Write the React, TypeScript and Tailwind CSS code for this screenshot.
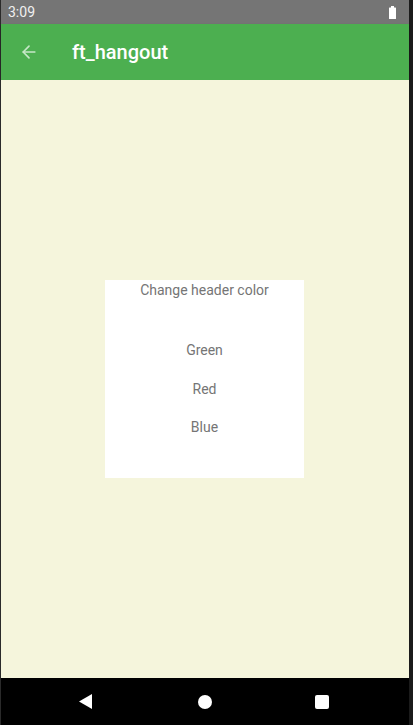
import { ArrowLeft } from "lucide-react";

export default function App() {
    const colors = ["Green", "Red", "Blue"];

    return (
        <div className="flex h-[725px] w-[413px] bg-[#1b1b1b] font-['Roboto',sans-serif]">
            {/* thin frame line on the left */}
            <div className="w-px bg-[#2a2a2a]" />

            <div className="flex w-[408px] flex-col">
                {/* Status bar */}
                <div className="flex h-6 items-center justify-between bg-[#757575] pl-[7px] pr-[13px]">
                    <span className="text-[14px] text-[#f0f0f0]">3:09</span>
                    <svg width="7" height="13" viewBox="0 0 7 13">
                        <rect x="2" y="0" width="3" height="2" fill="#ffffff" />
                        <rect x="0" y="1.5" width="7" height="11.5" rx="0.5" fill="#ffffff" />
                    </svg>
                </div>

                {/* App bar */}
                <div className="flex h-14 items-center bg-[#4caf50] shadow-[0_1px_2px_rgba(0,0,0,0.25)]">
                    <ArrowLeft className="ml-[18px] h-5 w-5 text-[#c6e7c7]" strokeWidth={2} />
                    <h1 className="ml-[33px] text-[20px] font-medium text-white">ft_hangout</h1>
                </div>

                {/* Body with dialog */}
                <div className="flex flex-1 items-center justify-center bg-[#f5f5dc]">
                    <div className="-ml-px flex h-[198px] w-[199px] flex-col items-center bg-white text-[14px] text-[#757575]">
                        <p className="mt-0">Change header color</p>
                        <div className="mt-[41px] flex flex-col items-center gap-[22px]">
                            {colors.map((c) => (
                                <span key={c} className="leading-[16.5px]">{c}</span>
                            ))}
                        </div>
                    </div>
                </div>

                {/* Navigation bar */}
                <div className="flex h-[47px] items-center bg-black pl-[78px]">
                    <svg width="14" height="15" viewBox="0 0 14 15">
                        <polygon points="13,0 13,15 0,7.5" fill="#ffffff" />
                    </svg>
                    <div className="ml-[105px] h-[14px] w-[14px] rounded-full bg-white" />
                    <div className="ml-[103px] h-[14px] w-[14px] rounded-[2px] bg-white" />
                </div>
            </div>
        </div>
    );
}
